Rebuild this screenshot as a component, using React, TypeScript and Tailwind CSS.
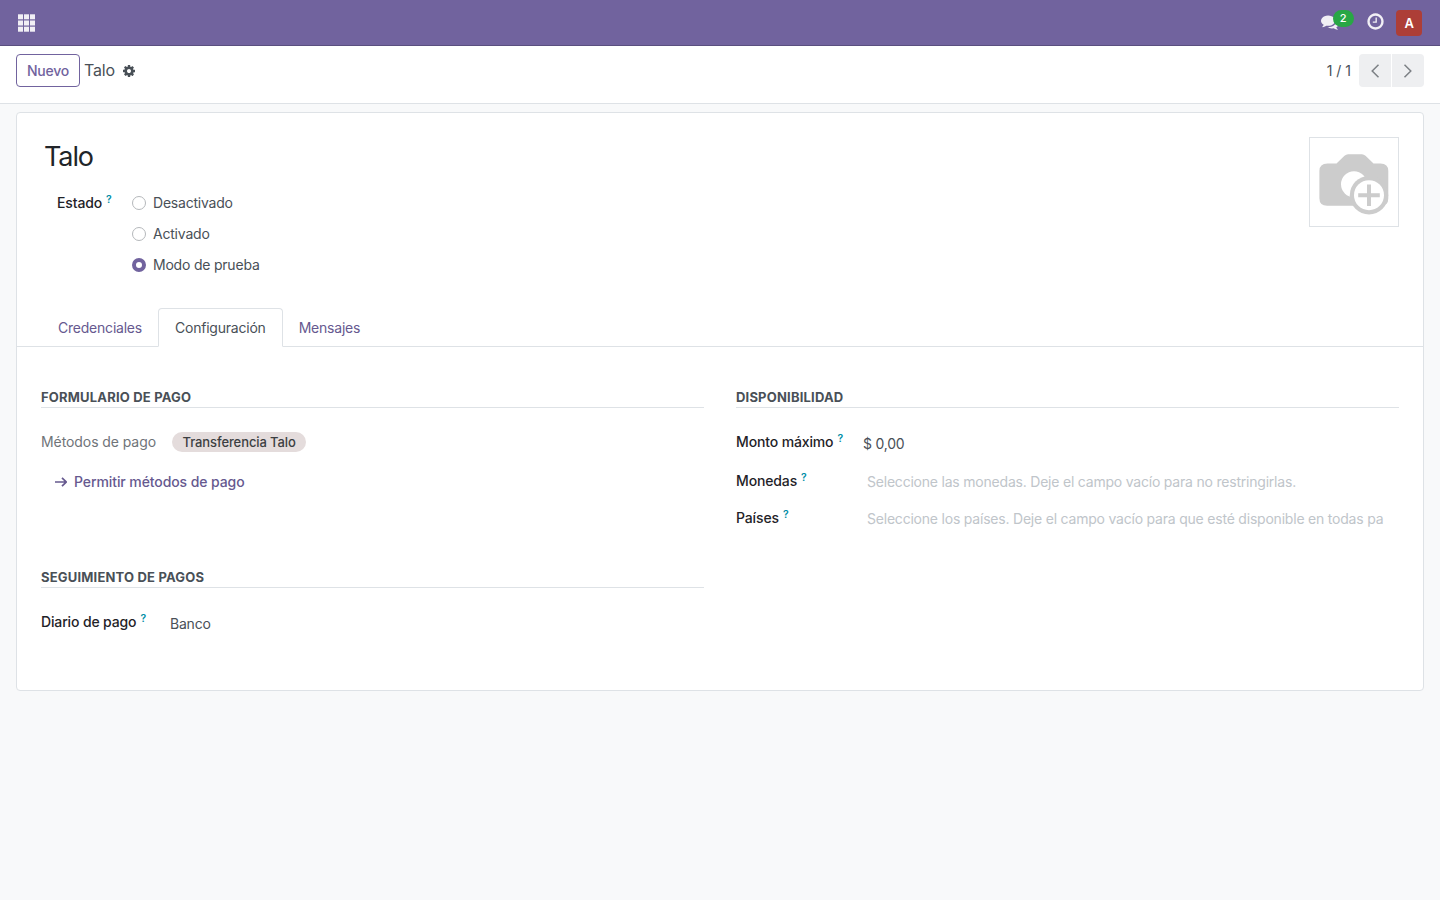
import { useState } from 'react';
import type { ReactNode } from 'react';
import clsx from 'clsx';

const states = ['Desactivado', 'Activado', 'Modo de prueba'];
const tabs = ['Credenciales', 'Configuración', 'Mensajes'];

const GearIcon = () => (
  <svg viewBox="0 0 1792 1792" className="h-[14px] w-[14px]" fill="currentColor">
    <path d="M1152 896q0-106-75-181t-181-75-181 75-75 181 75 181 181 75 181-75 75-181zm512-109v222q0 12-8 23t-20 13l-185 28q-19 54-39 91 35 50 107 138 10 12 10 25t-9 23q-27 37-99 108t-94 71q-12 0-26-9l-138-108q-44 23-91 38-16 136-29 186-7 28-36 28h-222q-14 0-24.500-8.500t-11.500-21.500l-28-184q-49-16-90-37l-141 107q-10 9-25 9-14 0-25-11-126-114-165-168-7-10-7-23 0-12 8-23 15-21 51-66.500t54-70.500q-27-50-41-99l-183-27q-13-2-21-12.500t-8-23.500v-222q0-12 8-23t19-13l186-28q14-46 39-92-40-57-107-138-10-12-10-24 0-10 9-23 26-36 98.500-107.500t94.500-71.500q13 0 26 10l138 107q44-23 91-38 16-136 29-186 7-28 36-28h222q14 0 24.500 8.500t11.500 21.500l28 184q49 16 90 37l142-107q9-9 24-9 13 0 25 10 129 119 165 170 7 8 7 22 0 12-8 23-15 21-51 66.500t-54 70.500q26 50 41 98l183 28q13 2 21 12.500t8 23.500z" />
  </svg>
);

const CommentsIcon = () => (
  <svg viewBox="0 0 1792 1792" className="h-[18px] w-[18px]" fill="currentColor">
    <path d="M1408 768q0 139-94 257t-256.500 186.500-353.500 68.500q-86 0-176-16-124 88-278 128-36 9-86 16h-3q-11 0-20.500-8t-11.500-21q-1-3-1-6.500t.5-6.500 2-6l2.500-5 3.500-5.500 4-5 4.500-5 4-4.500q5-6 23-25t26-29.500 22.500-29 25-38.500 20.500-44q-124-72-195-177t-71-224q0-139 94-257t256.500-186.500 353.500-68.500 353.500 68.500 256.500 186.500 94 257zm384 256q0 120-71 224.500t-195 176.500q10 24 20.500 44t25 38.500 22.500 29 26 29.500 23 25q1 1 4 4.500t4.500 5 4 5 3.500 5.500l2.500 5 2 6 .5 6.500-1 6.500q-3 14-13 22t-22 7q-50-7-86-16-154-40-278-128-90 16-176 16-271 0-472-132 58 4 88 4 161 0 309-45t264-129q125-92 192-212t67-254q0-77-23-152 129 71 204 178t75 230z" />
  </svg>
);

const ClockIcon = () => (
  <svg viewBox="0 0 1792 1792" className="h-[19px] w-[19px]" fill="currentColor">
    <path d="M1024 544v448q0 14-9 23t-23 9h-320q-14 0-23-9t-9-23v-64q0-14 9-23t23-9h224v-352q0-14 9-23t23-9h64q14 0 23 9t9 23zm416 352q0-148-73-273t-198-198-273-73-273 73-198 198-73 273 73 273 198 198 273 73 273-73 198-198 73-273zm224 0q0 209-103 385.500t-279.500 279.500-385.500 103-385.500-103-279.500-279.500-103-385.500 103-385.500 279.500-279.500 385.500-103 385.500 103 279.500 279.500 103 385.500z" />
  </svg>
);

const CameraPlaceholder = () => (
  <svg viewBox="0 0 88 88" className="h-[88px] w-[88px]">
    <path
      d="M17.500 25.500h9l8-7.800q1.600-1.500 3.600-1.500h13.800q2 0 3.600 1.500l8 7.800H70.500q7.800 0 7.800 7.500v27.200q0 7.500-7.500 7.500H17.200q-7.800 0-7.800-7.500V33q0-7.500 8.100-7.500z"
      fill="#ccc"
    />
    <circle cx="44" cy="46.200" r="13" fill="#fff" />
    <circle cx="59" cy="57.200" r="19.200" fill="#ccc" />
    <circle cx="59" cy="57.200" r="15" fill="#fff" />
    <path d="M59 46.500v21.500M48.200 57.200h21.600" stroke="#ccc" strokeWidth="4" />
  </svg>
);

const Help = () => (
  <sup className="ml-1 text-[10.500px] font-semibold leading-none tracking-normal text-[#008da6]">?</sup>
);

const Label = ({ children, className }: { children: ReactNode; className?: string }) => (
  <div className={clsx('shrink-0 font-medium leading-[21px] tracking-[-0.14px] text-[#1f2328]', className)}>
    {children}
    <Help />
  </div>
);

const Separator = ({ children }: { children: ReactNode }) => (
  <h3 className="h-[21px] border-b border-[#dee2e6] text-[13px] font-bold uppercase leading-[20px] tracking-[0.19px] text-[#495057]">
    {children}
  </h3>
);

const Navbar = () => (
  <header className="flex h-[46px] items-center justify-between border-b border-[#5a4f7f] bg-[#71639e] pl-[18px] pr-[18px] text-white/90">
    <button aria-label="Aplicaciones">
      <svg viewBox="0 0 17 18" className="h-[18px] w-[17px]" fill="currentColor">
        {[0.300, 6.500, 12.700].map(y =>
          [0, 6, 12].map(x => <rect key={`${x}-${y}`} x={x} y={y} width="5" height="5" />)
        )}
      </svg>
    </button>
    <div className="flex items-center">
      <button className="relative mr-[27.500px] pb-[2px]" aria-label="Mensajes">
        <CommentsIcon />
        <span className="absolute -top-[3px] left-[12px] flex h-[17px] w-[21px] items-center justify-center rounded-full bg-[#28a745] text-[11px] font-medium text-white">
          2
        </span>
      </button>
      <button className="mr-[11px] pb-[2px]" aria-label="Actividades">
        <ClockIcon />
      </button>
      <div className="flex h-[26px] w-[26px] items-center justify-center rounded-[4px] bg-[#ad3e37] pt-px text-[13px] font-semibold text-white">
        A
      </div>
    </div>
  </header>
);

const ControlPanel = () => (
  <div className="flex h-[58px] items-start justify-between border-b border-[#dee2e6] bg-white px-4 pt-2">
    <div className="flex items-center">
      <button className="h-[33px] w-[64px] rounded-[4px] border border-[#71639e] font-medium tracking-[-0.2px] text-[#71639e]">
        Nuevo
      </button>
      <span className="ml-1 text-[16px] leading-[31px] tracking-[-0.15px]">Talo</span>
      <button className="ml-[7px]" aria-label="Acciones">
        <GearIcon />
      </button>
    </div>
    <div className="flex items-center">
      <span className="mr-2 tracking-normal">1 / 1</span>
      <div className="flex gap-px text-[#7c8085]">
        <button className="flex h-[33px] w-8 items-center justify-center rounded-l-[4px] bg-[#eeeff1]" aria-label="Anterior">
          <svg viewBox="0 0 14 14" className="h-[14px] w-[14px]" fill="none" stroke="currentColor" strokeWidth="1.500">
            <path d="M10.500.7 4.200 7l6.300 6.300" />
          </svg>
        </button>
        <button className="flex h-[33px] w-8 items-center justify-center rounded-r-[4px] bg-[#eeeff1]" aria-label="Siguiente">
          <svg viewBox="0 0 14 14" className="h-[14px] w-[14px]" fill="none" stroke="currentColor" strokeWidth="1.500">
            <path d="M3.500.7 9.800 7l-6.300 6.300" />
          </svg>
        </button>
      </div>
    </div>
  </div>
);

const App = () => {
  const [state, setState] = useState('Modo de prueba');
  const [tab, setTab] = useState('Configuración');

  return (
    <div className="min-h-screen bg-[#f8f9fa] font-['Inter',sans-serif] text-[14px] leading-[21px] tracking-[-0.21px] text-[#495057]">
      <Navbar />
      <ControlPanel />
      <main className="mx-4 mt-2 h-[579px] rounded-[4px] border border-[#dee2e6] bg-white">
        <div className="flex h-[195px] justify-between pl-[27px] pr-6 pt-6">
          <div>
            <h1 className="text-[27px] leading-[40px] tracking-[-1.1px] text-[#212529]">Talo</h1>
            <div className="ml-[13px] mt-[15px] flex">
              <Label className="w-[75px]">Estado</Label>
              <div className="flex flex-col gap-[10px]">
                {states.map(item => (
                  <label key={item} className="flex items-center gap-[7px]">
                    <input
                      type="radio"
                      name="state"
                      checked={state === item}
                      onChange={() => setState(item)}
                      className={clsx(
                        'h-[14px] w-[14px] appearance-none rounded-full bg-white',
                        state === item ? 'border-4 border-[#71639e]' : 'border border-[#b5b8bb]'
                      )}
                    />
                    {item}
                  </label>
                ))}
              </div>
            </div>
          </div>
          <div className="h-[90px] w-[90px] border border-[#dee2e6]">
            <CameraPlaceholder />
          </div>
        </div>

        <nav className="flex h-[39px] border-b border-[#dee2e6] pl-[25px]">
          {tabs.map(item => (
            <button
              key={item}
              onClick={() => setTab(item)}
              className={clsx(
                '-ml-px h-[39px] rounded-t-[4px] border px-4 leading-[37px] tracking-[-0.22px]',
                tab === item
                  ? 'border-[#dee2e6] border-b-white bg-white text-[#495057]'
                  : 'border-transparent text-[#66598f]'
              )}
            >
              {item}
            </button>
          ))}
        </nav>

        <div className="grid grid-cols-2 gap-x-8 px-6 pt-10">
          <section className="h-[180px]">
            <Separator>Formulario de pago</Separator>
            <div className="mt-[23px] flex items-center">
              <span className="w-[131px] tracking-[-0.08px] text-[#6f7479]">Métodos de pago</span>
              <span className="h-5 rounded-full bg-[#e4dcdc] px-[10.500px] text-[13px] font-medium leading-5 tracking-[-0.1px] text-[#3c3f42]">
                Transferencia Talo
              </span>
            </div>
            <button className="ml-[14px] mt-[19px] flex items-center gap-[7px] font-medium tracking-[-0.09px] text-[#66598f]">
              <svg viewBox="0 0 12 12" className="h-3 w-3" fill="none" stroke="currentColor" strokeWidth="1.700">
                <path d="M0 6h11M7 1.800 11.200 6 7 10.200" />
              </svg>
              Permitir métodos de pago
            </button>
          </section>

          <section className="h-[180px]">
            <Separator>Disponibilidad</Separator>
            <div className="mt-[23px] flex h-[39px]">
              <Label className="w-[127px]">Monto máximo</Label>
              <span className="pt-[2px]">$ 0,00</span>
            </div>
            <div className="flex h-[37px]">
              <Label className="w-[131px]">Monedas</Label>
              <span className="pt-px text-[#c0c5ca]">Seleccione las monedas. Deje el campo vacío para no restringirlas.</span>
            </div>
            <div className="flex h-[37px]">
              <Label className="w-[131px]">Países</Label>
              <span className="whitespace-nowrap pt-px text-[#c0c5ca]">
                Seleccione los países. Deje el campo vacío para que esté disponible en todas pa
              </span>
            </div>
          </section>

          <section>
            <Separator>Seguimiento de pagos</Separator>
            <div className="mt-[23px] flex">
              <Label className="w-[129px]">Diario de pago</Label>
              <span className="pt-[2px]">Banco</span>
            </div>
          </section>
        </div>
      </main>
    </div>
  );
};

export default App;
